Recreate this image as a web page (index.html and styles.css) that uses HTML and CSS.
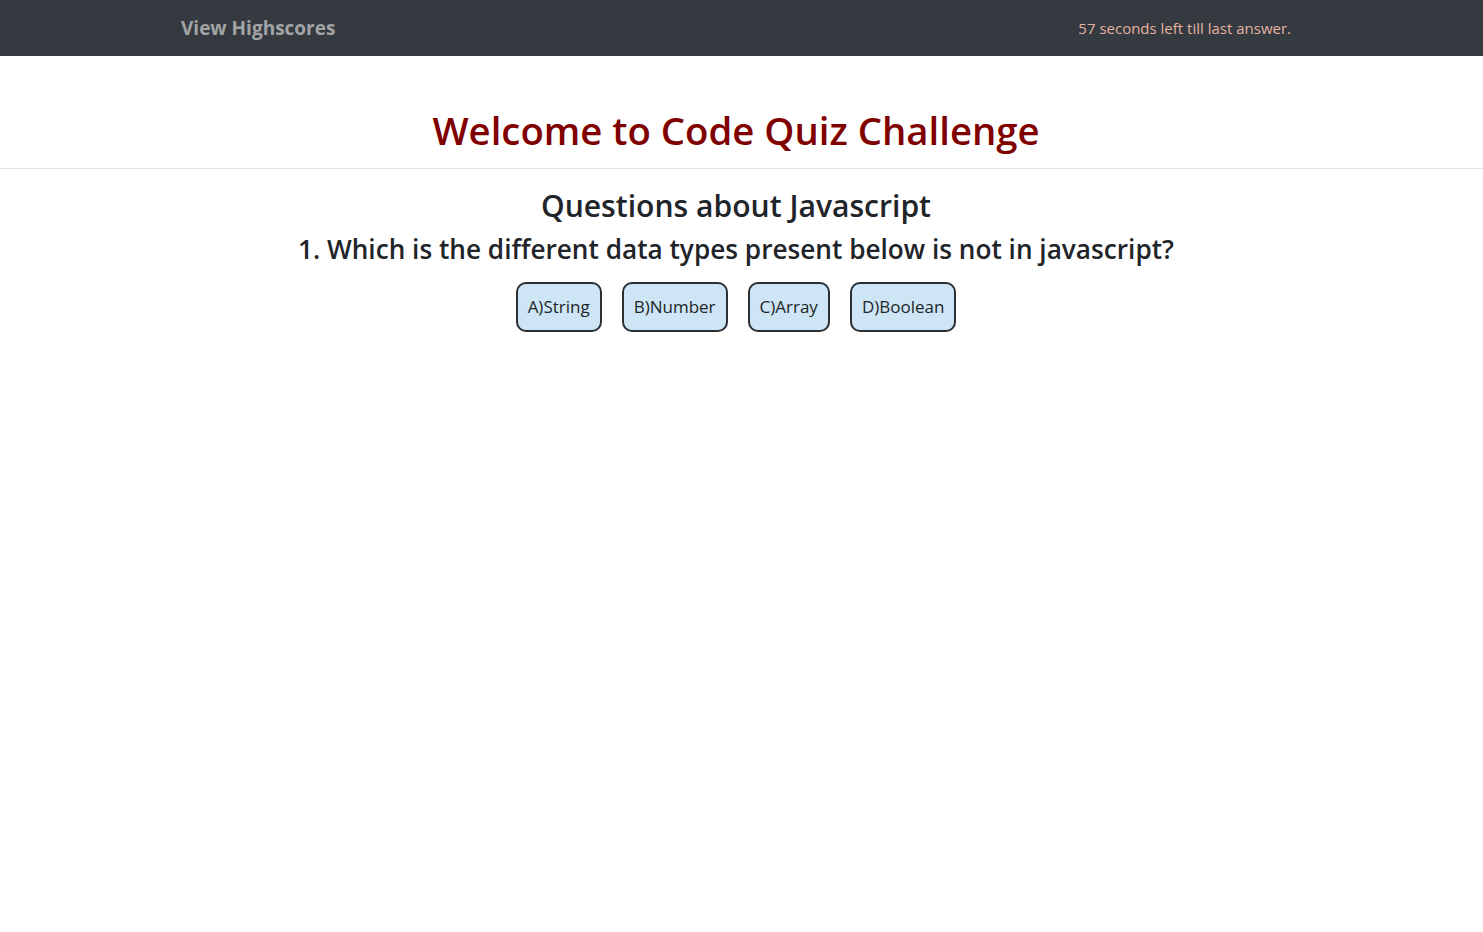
FILE: index.html
```html
<!DOCTYPE html>
<html lang="en">
<head>
<meta charset="utf-8">
<title>Code Quiz</title>
<link rel="stylesheet" href="styles.css">
</head>
<body>
<nav class="navbar">
  <a class="brand" href="#">View Highscores</a>
  <span class="timer">57 seconds left till last answer.</span>
</nav>
<header class="hero">
  <h1 class="title">Welcome to Code Quiz Challenge</h1>
</header>
<main class="quiz">
  <h2 class="subtitle">Questions about Javascript</h2>
  <h3 class="question">1. Which is the different data types present below is not in javascript?</h3>
  <div class="answers">
    <button class="answer">A)String</button>
    <button class="answer">B)Number</button>
    <button class="answer">C)Array</button>
    <button class="answer">D)Boolean</button>
  </div>
</main>
</body>
</html>
```
FILE: styles.css
```css
* { box-sizing: border-box; }
body {
  margin: 0;
  font-family: "Open Sans", "Noto Sans", sans-serif;
  color: #212529;
  background: #fff;
}
.navbar {
  height: 56px;
  background: #343a40;
  display: flex;
  align-items: center;
  justify-content: space-between;
  padding: 0 192px 0 181px;
}
.brand {
  color: #a3a4a6;
  font-weight: 700;
  font-size: 19px;
  text-decoration: none;
}
.timer {
  color: #e6b3a0;
  font-size: 15px;
}
.hero {
  border-bottom: 1px solid #e3e3e3;
  height: 113px;
  display: flex;
  align-items: flex-end;
  justify-content: center;
  padding: 0 11px 14px 0;
}
.title {
  margin: 0;
  color: #800000;
  font-size: 38.3px;
  font-weight: 600;
  line-height: 1.2;
}
.quiz {
  text-align: center;
  padding: 19px 11px 0 0;
}
.subtitle {
  margin: 0;
  font-size: 30.1px;
  font-weight: 600;
  line-height: 1.2;
}
.question {
  margin: 10px 0 0;
  font-size: 26.2px;
  font-weight: 600;
  line-height: 1.2;
}
.answers {
  display: flex;
  justify-content: center;
  gap: 20px;
  margin-top: 16px;
}
.answer {
  font-family: inherit;
  font-size: 17px;
  color: #212529;
  background: #cde5f5;
  border: 2px solid #2b2f33;
  border-radius: 10px;
  height: 50px;
  padding: 0 10px;
}
```
